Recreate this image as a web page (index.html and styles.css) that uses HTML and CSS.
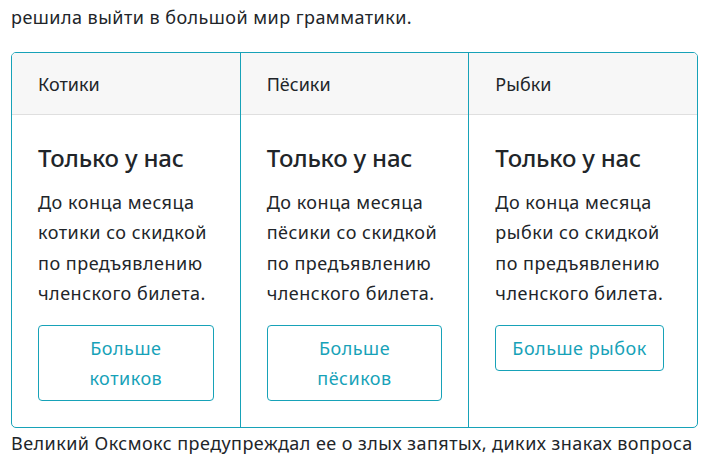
FILE: index.html
```html
<!DOCTYPE html>
<html lang="ru">
<head>
<meta charset="utf-8">
<link rel="stylesheet" href="styles.css">
</head>
<body>
<div class="page">
  <p class="para first">решила выйти в большой мир грамматики.</p>
  <div class="card-group">
    <div class="card">
      <div class="card-header">Котики</div>
      <div class="card-body">
        <h5 class="card-title">Только у нас</h5>
        <p class="card-text">До конца месяца котики со скидкой по предъявлению членского билета.</p>
        <a class="btn">Больше котиков</a>
      </div>
    </div>
    <div class="card">
      <div class="card-header">Пёсики</div>
      <div class="card-body">
        <h5 class="card-title">Только у нас</h5>
        <p class="card-text">До конца месяца пёсики со скидкой по предъявлению членского билета.</p>
        <a class="btn">Больше пёсиков</a>
      </div>
    </div>
    <div class="card">
      <div class="card-header">Рыбки</div>
      <div class="card-body">
        <h5 class="card-title">Только у нас</h5>
        <p class="card-text">До конца месяца рыбки со скидкой по предъявлению членского билета.</p>
        <a class="btn">Больше рыбок</a>
      </div>
    </div>
  </div>
  <p class="para last">Великий Оксмокс предупреждал ее о злых запятых, диких знаках вопроса</p>
</div>
</body>
</html>
```
FILE: styles.css
```css
html, body {
  margin: 0;
  padding: 0;
  background: #fff;
}
body {
  font-family: "Noto Sans", "Open Sans", sans-serif;
  font-size: 18px;
  line-height: 30.6px;
  color: #212529;
}
.page {
  padding: 2px 14px 0 11px;
}
.para {
  margin: 0;
  letter-spacing: 0.45px;
  white-space: nowrap;
}
.first {
  margin-bottom: 19px;
}
.card-group {
  display: flex;
  border: 1px solid #17a2b8;
  border-radius: 5px;
  overflow: hidden;
}
.card {
  flex: 1 1 0;
  min-width: 0;
  display: flex;
  flex-direction: column;
  border-left: 1px solid #17a2b8;
}
.card:first-child {
  border-left: none;
}
.card-header {
  background: #f7f7f7;
  border-bottom: 1px solid #dfdfdf;
  padding: 16px 26px 15px 26px;
  line-height: 30px;
}
.card-body {
  padding: 26px 26px 26px 26px;
  display: flex;
  flex-direction: column;
  align-items: flex-start;
}
.card-title {
  margin: 0 0 12px 0;
  font-size: 24px;
  font-weight: 500;
  line-height: 34px;
  letter-spacing: -0.2px;
}
.card-text {
  margin: 0 0 16px 0;
  letter-spacing: 0.5px;
}
.btn {
  display: inline-block;
  text-align: center;
  color: #17a2b8;
  border: 1px solid #17a2b8;
  border-radius: 4px;
  padding: 7px 16px;
  line-height: 30px;
  letter-spacing: 0.5px;
}
```
